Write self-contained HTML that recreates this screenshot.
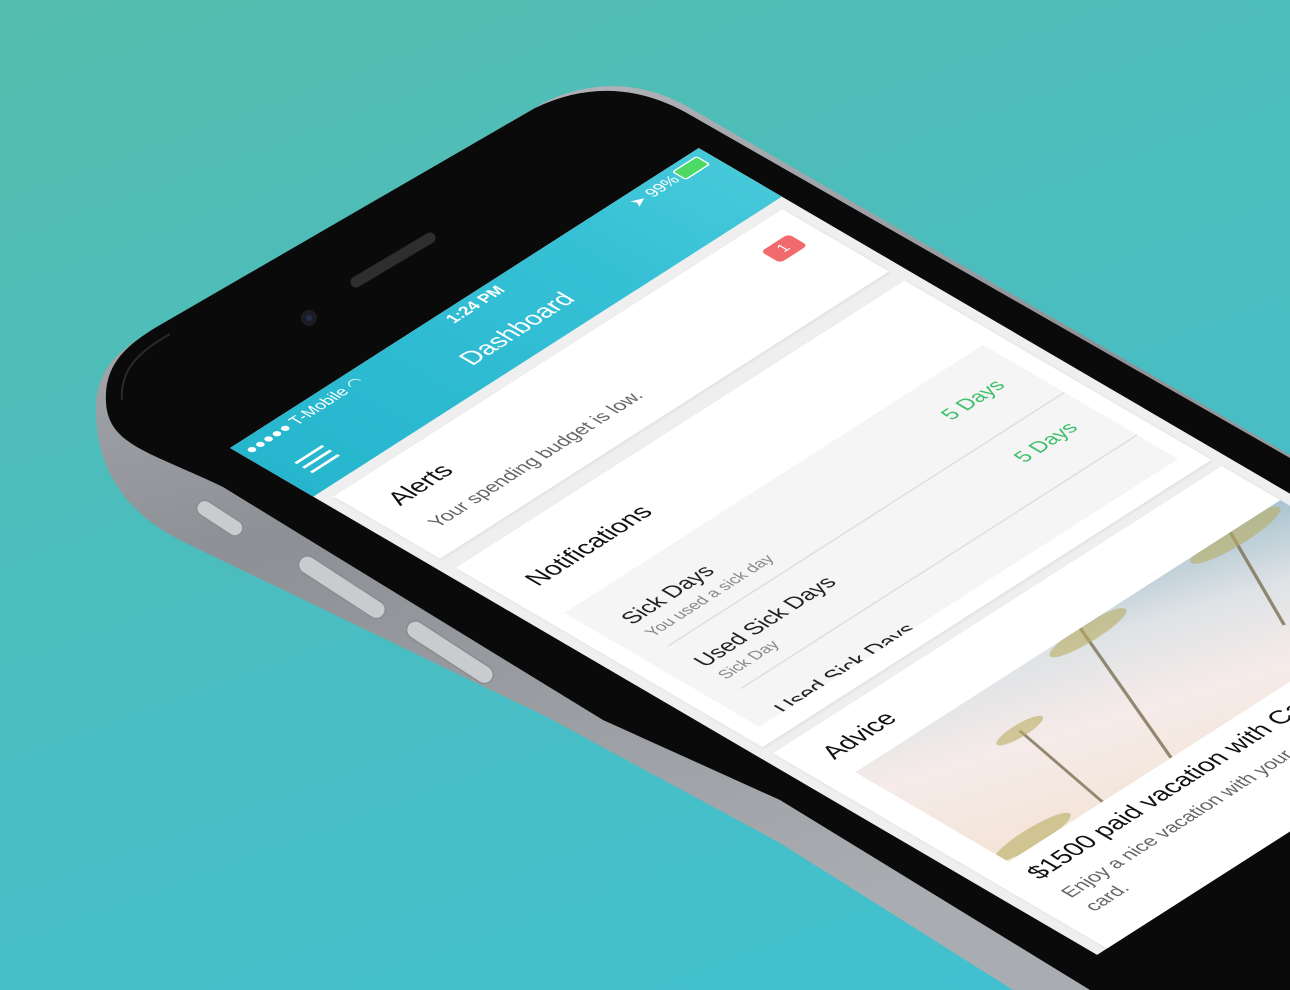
<!DOCTYPE html>
<html><head><meta charset="utf-8"><style>
html,body{margin:0;padding:0}
body{width:1290px;height:990px;overflow:hidden;position:relative;background:linear-gradient(160deg,#54bdae 0%,#4bbdbf 45%,#3fc1d2 100%);font-family:"Liberation Sans",sans-serif}
svg.ph{position:absolute;left:0;top:0}
#scr{position:absolute;left:0;top:0;width:375px;height:667px;transform-origin:0 0;transform:matrix(1.25,-0.8,1.3,0.76,230,448);background:#efefef;overflow:hidden}
.hdr{position:absolute;left:0;top:0;width:375px;height:64px;background:linear-gradient(90deg,#25b6cd,#36c0d6 70%,#45c9d9)}
.sb{position:absolute;top:3px;font-size:11px;color:#fff}
.card{position:absolute;left:8px;width:359px;background:#fff;box-shadow:0 1px 2px rgba(0,0,0,.08)}
.t{position:absolute;font-size:17px;color:#111}
.s{position:absolute;font-size:13px;color:#666}
.g{color:#3cc06a}
</style></head><body>
<svg class="ph" width="1290" height="990" viewBox="0 0 1290 990">
<defs>
<linearGradient id="sil" x1="0" y1="0" x2="0.3" y2="1"><stop offset="0" stop-color="#b8bbbf"/><stop offset="0.5" stop-color="#8d9095"/><stop offset="1" stop-color="#a9acb0"/></linearGradient>
</defs>
<path d="M96 415 C94 378 110 357 140 338 L545 102 C595 78 645 82 690 108 L1290 455 L1290 990 L1013 990 L780 843 L547 717 L190 545 C125 515 98 470 96 415 Z" fill="url(#sil)"/>
<path d="M106 402 C104 366 124 346 160 325 L535 108 C585 84 635 85 685 112 L1290 458 L1290 990 L1090 990 L780 800 L603 720 L223 487 C150 452 108 445 106 402 Z" fill="#0a0a0a"/>
<path d="M122 400 C120 370 138 352 170 334" stroke="#2a2a2a" stroke-width="2" fill="none"/>
<line x1="356" y1="282" x2="430" y2="238" stroke="#2e2e2e" stroke-width="11" stroke-linecap="round"/>
<circle cx="309" cy="318" r="8" fill="#1c1c24"/><circle cx="309" cy="318" r="3" fill="#22304a"/>
<g fill="#c9cbce" stroke="#8a8c90" stroke-width="1.5">
<rect x="0" y="-8" width="52" height="16" rx="8" transform="translate(198 504) rotate(33)"/>
<rect x="0" y="-9" width="100" height="18" rx="9" transform="translate(300 560) rotate(33)"/>
<rect x="0" y="-9" width="100" height="18" rx="9" transform="translate(408 625) rotate(33)"/>
</g>
</svg>
<div id="scr">
 <div class="hdr">
  <div class="sb" style="left:4px">●●●●● T-Mobile ◠</div>
  <div class="sb" style="left:0;width:375px;text-align:center;font-weight:bold">1:24 PM</div>
  <div class="sb" style="right:28px">➤ 99%</div>
  <div style="position:absolute;right:6px;top:4px;width:18px;height:9px;border:1px solid #fff;border-radius:2px;background:#4cd964"></div>
  <div style="position:absolute;left:15px;top:35px;width:22px;height:2px;background:#fff;box-shadow:0 6px 0 #fff,0 12px 0 #fff"></div>
  <div style="position:absolute;left:0;top:31px;width:375px;text-align:center;color:#fff;font-size:17px">Dashboard</div>
 </div>
 <div class="card" style="top:72px;height:82px">
  <div class="t" style="left:19px;top:18px">Alerts</div>
  <div style="position:absolute;right:14px;top:18px;width:22px;height:15px;background:#f06a6e;border-radius:3px;color:#fff;font-size:10px;text-align:center;line-height:15px">1</div>
  <div class="s" style="left:19px;top:50px">Your spending budget is low.</div>
 </div>
 <div class="card" style="top:166px;height:236px">
  <div class="t" style="left:19px;top:30px">Notifications</div>
  <div style="position:absolute;left:12px;top:72px;width:335px;height:150px;background:#f5f5f5;overflow:hidden">
   <div style="position:absolute;left:18px;top:22px;font-size:15px;color:#222">Sick Days</div>
   <div style="position:absolute;left:18px;top:42px;font-size:11px;color:#888">You used a sick day</div>
   <div class="g" style="position:absolute;right:18px;top:22px;font-size:14px">5 Days</div>
   <div style="position:absolute;left:18px;right:0;top:62px;border-top:1px solid #ddd"></div>
   <div style="position:absolute;left:18px;top:78px;font-size:15px;color:#222">Used Sick Days</div>
   <div style="position:absolute;left:18px;top:98px;font-size:11px;color:#888">Sick Day</div>
   <div class="g" style="position:absolute;right:18px;top:78px;font-size:14px">5 Days</div>
   <div style="position:absolute;left:18px;right:0;top:118px;border-top:1px solid #ddd"></div>
   <div style="position:absolute;left:18px;top:140px;font-size:15px;color:#222">Used Sick Days</div>
  </div>
 </div>
 <div class="card" style="top:410px;height:257px">
  <div class="t" style="left:19px;top:14px">Advice</div>
  <div style="position:absolute;left:19px;top:45px;width:340px;height:118px;background:linear-gradient(200deg,#a9c3cf 0%,#dfe3e6 30%,#f6ebe9 60%,#f3e4d6 100%);overflow:hidden">
   <svg width="340" height="118" viewBox="0 0 340 118">
    <g stroke="#7a7055" stroke-width="2" fill="none" opacity=".8">
     <line x1="180" y1="0" x2="130" y2="118"/><line x1="300" y1="0" x2="260" y2="80"/><line x1="90" y1="40" x2="75" y2="118"/>
    </g>
    <g fill="#b9ae62" opacity=".6">
     <ellipse cx="180" cy="6" rx="30" ry="7"/><ellipse cx="300" cy="4" rx="35" ry="8"/><ellipse cx="90" cy="40" rx="18" ry="5"/><ellipse cx="25" cy="112" rx="30" ry="7"/>
    </g>
   </svg>
  </div>
  <div style="position:absolute;left:19px;top:172px;font-size:17px;color:#111;white-space:nowrap">$1500 paid vacation with Capital One</div>
  <div class="s" style="left:19px;top:198px;width:320px;line-height:18px">Enjoy a nice vacation with your Capital One rewards card.</div>
 </div>
</div>
</body></html>
